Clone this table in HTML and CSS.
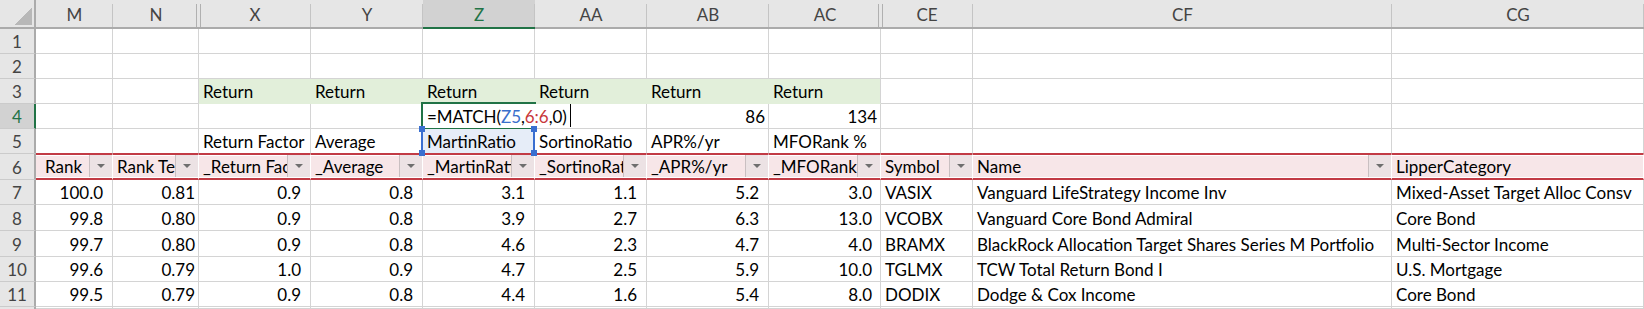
FILE: index.html
```html
<!DOCTYPE html>
<html>
<head>
<meta charset="utf-8">
<link rel="stylesheet" href="styles.css">
</head>
<body>
<div class="sheet">
  <!-- column headers -->
  <div class="ch corner"><span class="tri"></span></div>
  <div class="ch">M</div>
  <div class="ch hidden-r">N</div>
  <div class="ch hidden-l">X</div>
  <div class="ch">Y</div>
  <div class="ch sel">Z</div>
  <div class="ch">AA</div>
  <div class="ch">AB</div>
  <div class="ch hidden-r">AC</div>
  <div class="ch hidden-l">CE</div>
  <div class="ch">CF</div>
  <div class="ch">CG</div>

  <!-- row 1 -->
  <div class="rh">1</div>
  <div class="c"></div><div class="c"></div><div class="c"></div><div class="c"></div><div class="c"></div><div class="c"></div><div class="c"></div><div class="c"></div><div class="c"></div><div class="c"></div><div class="c"></div>

  <!-- row 2 -->
  <div class="rh">2</div>
  <div class="c"></div><div class="c"></div><div class="c"></div><div class="c"></div><div class="c"></div><div class="c"></div><div class="c"></div><div class="c"></div><div class="c"></div><div class="c"></div><div class="c"></div>

  <!-- row 3 -->
  <div class="rh">3</div>
  <div class="c"></div><div class="c"></div>
  <div class="c g">Return</div>
  <div class="c g">Return</div>
  <div class="c g">Return</div>
  <div class="c g">Return</div>
  <div class="c g">Return</div>
  <div class="c g g-last">Return</div>
  <div class="c"></div><div class="c"></div><div class="c"></div>

  <!-- row 4 -->
  <div class="rh rsel">4</div>
  <div class="c"></div><div class="c"></div><div class="c"></div><div class="c"></div>
  <div class="c edit"><span class="ftext">=MATCH(<span class="ref1">Z5</span>,<span class="ref2">6:6</span>,0)</span><span class="caret"></span></div>
  <div class="c"></div>
  <div class="c n4">86</div>
  <div class="c n4">134</div>
  <div class="c"></div><div class="c"></div><div class="c"></div>

  <!-- row 5 -->
  <div class="rh">5</div>
  <div class="c tb"></div><div class="c tb"></div>
  <div class="c tb">Return Factor</div>
  <div class="c tb">Average</div>
  <div class="c tb refcell">MartinRatio<span class="hd hd1"></span><span class="hd hd2"></span><span class="hd hd3"></span><span class="hd hd4"></span></div>
  <div class="c tb">SortinoRatio</div>
  <div class="c tb">APR%/yr</div>
  <div class="c tb">MFORank %</div>
  <div class="c tb"></div><div class="c tb"></div><div class="c tb"></div>

  <!-- row 6 -->
  <div class="rh">6</div>
  <div class="c t"><span class="tt ind">Rank</span><span class="dd"></span></div>
  <div class="c t"><span class="tt">Rank Tenure</span><span class="dd"></span></div>
  <div class="c t"><span class="tt">_Return Factor</span><span class="dd"></span></div>
  <div class="c t"><span class="tt">_Average</span><span class="dd"></span></div>
  <div class="c t"><span class="tt">_MartinRatio</span><span class="dd"></span></div>
  <div class="c t"><span class="tt">_SortinoRatio</span><span class="dd"></span></div>
  <div class="c t"><span class="tt">_APR%/yr</span><span class="dd"></span></div>
  <div class="c t"><span class="tt">_MFORank %</span><span class="dd"></span></div>
  <div class="c t"><span class="tt">Symbol</span><span class="dd"></span></div>
  <div class="c t"><span class="tt">Name</span><span class="dd"></span></div>
  <div class="c t"><span class="tt">LipperCategory</span></div>

  <!-- row 7 -->
  <div class="rh">7</div>
  <div class="c n">100.0</div><div class="c n4">0.81</div><div class="c n">0.9</div><div class="c n">0.8</div><div class="c n">3.1</div><div class="c n">1.1</div><div class="c n">5.2</div><div class="c n nl">3.0</div>
  <div class="c">VASIX</div><div class="c">Vanguard LifeStrategy Income Inv</div><div class="c">Mixed-Asset Target Alloc Consv</div>

  <!-- row 8 -->
  <div class="rh">8</div>
  <div class="c n">99.8</div><div class="c n4">0.80</div><div class="c n">0.9</div><div class="c n">0.8</div><div class="c n">3.9</div><div class="c n">2.7</div><div class="c n">6.3</div><div class="c n nl">13.0</div>
  <div class="c">VCOBX</div><div class="c">Vanguard Core Bond Admiral</div><div class="c">Core Bond</div>

  <!-- row 9 -->
  <div class="rh">9</div>
  <div class="c n">99.7</div><div class="c n4">0.80</div><div class="c n">0.9</div><div class="c n">0.8</div><div class="c n">4.6</div><div class="c n">2.3</div><div class="c n">4.7</div><div class="c n nl">4.0</div>
  <div class="c">BRAMX</div><div class="c">BlackRock Allocation Target Shares Series M Portfolio</div><div class="c">Multi-Sector Income</div>

  <!-- row 10 -->
  <div class="rh">10</div>
  <div class="c n">99.6</div><div class="c n4">0.79</div><div class="c n">1.0</div><div class="c n">0.9</div><div class="c n">4.7</div><div class="c n">2.5</div><div class="c n">5.9</div><div class="c n nl">10.0</div>
  <div class="c">TGLMX</div><div class="c">TCW Total Return Bond I</div><div class="c">U.S. Mortgage</div>

  <!-- row 11 -->
  <div class="rh">11</div>
  <div class="c n">99.5</div><div class="c n4">0.79</div><div class="c n">0.9</div><div class="c n">0.8</div><div class="c n">4.4</div><div class="c n">1.6</div><div class="c n">5.4</div><div class="c n nl">8.0</div>
  <div class="c">DODIX</div><div class="c">Dodge &amp; Cox Income</div><div class="c">Core Bond</div>

  <!-- row 12 (partially visible) -->
  <div class="rh last"></div>
  <div class="c"></div><div class="c"></div><div class="c"></div><div class="c"></div><div class="c"></div><div class="c"></div><div class="c"></div><div class="c"></div><div class="c"></div><div class="c"></div><div class="c"></div>
</div>
</body>
</html>
```
FILE: styles.css
```css
html, body {
  margin: 0;
  padding: 0;
  background: #ffffff;
}
body {
  width: 1644px;
  height: 309px;
  overflow: hidden;
}
.sheet {
  display: grid;
  grid-template-columns: 36px 77px 86px 112px 112px 112px 112px 122px 112px 92px 419px 252px;
  grid-template-rows: 29px 25px 25px 25px 25px 25px 26px 25px 26px 26px 25px 25px 2px;
  font-family: "Lato", "Liberation Sans", sans-serif;
  font-size: 17px;
  color: #000;
  overflow: hidden;
}
.sheet > div {
  box-sizing: border-box;
  min-width: 0;
}

/* column headers */
.ch {
  background: #e6e6e6 linear-gradient(#c4c4c4, #c4c4c4) right 0 top 4px / 1px 100% no-repeat;
  border-bottom: 2px solid #ababab;
  color: #444;
  display: flex;
  align-items: center;
  justify-content: center;
  padding-top: 2px;
  line-height: 20px;
}
.ch.corner {
  background: #e6e6e6;
  border-right: 2px solid #ababab;
  align-items: flex-end;
  justify-content: flex-end;
  padding: 0 2px 2px 0;
}
.tri {
  width: 18px;
  height: 18px;
  background: linear-gradient(to bottom right, transparent 50%, #b8b8b8 50%);
}
.ch.hidden-r {
  background:
    linear-gradient(#b0b0b0, #b0b0b0) right 2px top 4px / 1px 100% no-repeat,
    #e6e6e6;
}
.ch.hidden-l {
  background:
    linear-gradient(#b0b0b0, #b0b0b0) left 1px top 4px / 1px 100% no-repeat,
    linear-gradient(#c4c4c4, #c4c4c4) right 0 top 4px / 1px 100% no-repeat,
    #e6e6e6;
}
.ch.sel {
  background: #d2d2d2 linear-gradient(#c4c4c4, #c4c4c4) right 0 top 4px / 1px 100% no-repeat;
  border-bottom-color: #217346;
  color: #217346;
}

/* row headers */
.rh {
  background: #e6e6e6;
  border-right: 2px solid #ababab;
  border-bottom: 1px solid #cbcbcb;
  color: #444;
  display: flex;
  align-items: flex-end;
  justify-content: center;
  padding-bottom: 1px;
  line-height: 20px;
}
.rh.rsel {
  background: #d2d2d2;
  border-right-color: #217346;
  color: #217346;
}
.rh.last {
  border-bottom: none;
  padding: 0;
}

/* cells */
.c {
  border-right: 1px solid #d4d4d4;
  border-bottom: 1px solid #d4d4d4;
  display: flex;
  align-items: flex-end;
  padding: 0 4px 1px 4px;
  line-height: 20px;
  white-space: nowrap;
  overflow: hidden;
}
.c.n {
  justify-content: flex-end;
  padding-right: 9px;
}
.c.n.nl {
  padding-right: 8px;
}
.c.n4 {
  justify-content: flex-end;
  padding-right: 3px;
}
.c.g {
  background: #e2efda;
  border-right-color: #e2efda;
  border-bottom-color: #e2efda;
}
.c.g.g-last {
  border-right-color: #d4d4d4;
}

/* edit cell */
.c.edit {
  position: relative;
  overflow: visible;
  z-index: 3;
  border-right-color: #fff;
}
.c.edit::before {
  content: "";
  position: absolute;
  left: -2px;
  top: -2px;
  width: 115px;
  height: 28px;
  box-sizing: border-box;
  border: 2px solid #217346;
  border-right: none;
}
.ftext {
  position: relative;
  letter-spacing: -0.05px;
}
.ref1 { color: #3a6fcc; }
.ref2 { color: #c8383c; }
.caret {
  flex: none;
  width: 1px;
  height: 23px;
  background: #000;
  margin-left: 3px;
  align-self: center;
}

/* row 5 above table */
.c.tb {
  border-bottom-color: #c23b45;
}
.c.refcell {
  position: relative;
  overflow: visible;
  z-index: 4;
  background: #e6edf8;
}
.c.refcell::before {
  content: "";
  position: absolute;
  left: -2px;
  top: -1px;
  width: 114px;
  height: 26px;
  box-sizing: border-box;
  border-left: 2px solid #3a6fd0;
  border-right: 2px solid #3a6fd0;
}
.hd {
  position: absolute;
  width: 6px;
  height: 6px;
  background: #3a6fd0;
}
.hd1 { left: -4px; top: -3px; }
.hd2 { left: 108px; top: -3px; }
.hd3 { left: -4px; top: 21px; }
.hd4 { left: 108px; top: 21px; }

/* table header row */
.c.t {
  background: #f7e6e8;
  border-top: 1px solid #c23b45;
  border-bottom: 2px solid #c23b45;
  border-right-color: #ffffff;
  box-shadow: inset 0 1px 0 #fff, inset 0 -1px 0 #fff;
  align-items: stretch;
  padding: 0 0 0 4px;
}
.tt {
  flex: 1;
  min-width: 0;
  overflow: hidden;
  white-space: nowrap;
  display: flex;
  align-items: flex-end;
  padding-bottom: 1px;
}
.tt.ind {
  padding-left: 5px;
}
.dd {
  flex: none;
  width: 23px;
  height: 22px;
  box-sizing: border-box;
  border-left: 1px solid #c9bfc1;
  background: #ece2e4;
  display: flex;
  align-items: center;
  justify-content: center;
  margin-bottom: 1px;
}
.dd::after {
  content: "";
  width: 0;
  height: 0;
  border-left: 4px solid transparent;
  border-right: 4px solid transparent;
  border-top: 4px solid #6e6e6e;
}
```
